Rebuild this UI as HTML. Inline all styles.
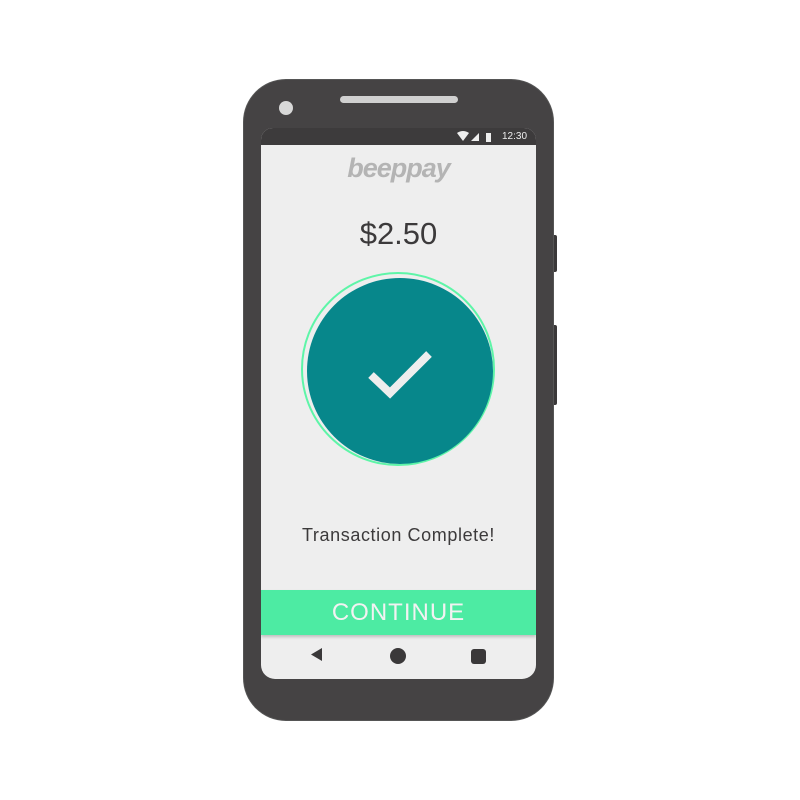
<!DOCTYPE html>
<html><head><style>
body{margin:0;width:800px;height:800px;background:#fff;position:relative;font-family:"Liberation Sans",sans-serif;overflow:hidden}
.a{position:absolute}
</style></head><body>
<div class="a" style="left:553px;top:235px;width:4px;height:37px;background:#3a3839;border-radius:0 2px 2px 0"></div>
<div class="a" style="left:553px;top:325px;width:4px;height:80px;background:#3a3839;border-radius:0 2px 2px 0"></div>
<div class="a" style="left:244px;top:80px;width:309px;height:640px;background:#454344;border-radius:42px;box-shadow:0 0 0 1px #555"></div>
<div class="a" style="left:279px;top:101px;width:14px;height:14px;background:#d8d8d8;border-radius:50%"></div>
<div class="a" style="left:340px;top:96px;width:118px;height:7px;background:#d0d0d0;border-radius:4px"></div>
<div class="a" style="left:261px;top:128px;width:275px;height:551px;background:#eeeeee;border-radius:12px 12px 14px 14px;overflow:hidden">
 <div class="a" style="left:0;top:0;width:275px;height:17px;background:#3d3b3c"></div>
 <svg class="a" style="left:196px;top:3px" width="50" height="12"><path d="M0 2 Q6 -2 12 2 L6 10Z" fill="#eee"/><path d="M14 10 L22 2 L22 10Z" fill="#eee"/><rect x="29" y="2" width="5" height="9" fill="#eee"/></svg>
 <div class="a" style="left:241px;top:3px;font-size:10px;color:#eee">12:30</div>
 <div class="a" style="left:0;top:25px;width:275px;text-align:center;font-size:27px;font-weight:bold;font-style:italic;color:#b4b4b4;letter-spacing:-1px">beeppay</div>
 <div class="a" style="left:0;top:88px;width:275px;text-align:center;font-size:31px;color:#3c3a3b">$2.50</div>
 <div class="a" style="left:40px;top:144px;width:194px;height:194px;border-radius:50%;border:2px solid #5ef5a8;box-sizing:border-box"></div>
 <div class="a" style="left:46px;top:150px;width:186px;height:186px;border-radius:50%;background:#07878b"></div>
 <svg class="a" style="left:100px;top:210px" width="80" height="70"><path d="M10 37 L29 55 L68 16" fill="none" stroke="#eeeeee" stroke-width="8"/></svg>
 <div class="a" style="left:0;top:397px;width:275px;text-align:center;font-size:18px;letter-spacing:0.6px;color:#3c3a3b">Transaction Complete!</div>
 <div class="a" style="left:0;top:462px;width:275px;height:45px;background:#4deba3;box-shadow:0 2px 3px rgba(0,0,0,.2);text-align:center;line-height:45px;font-size:24px;letter-spacing:1px;color:#f2f2f2">CONTINUE</div>
 <svg class="a" style="left:48px;top:518px" width="15" height="17"><path d="M2 8.5 L13 2 L13 15Z" fill="#3a3839"/></svg>
 <div class="a" style="left:129px;top:520px;width:16px;height:16px;border-radius:50%;background:#3a3839"></div>
 <div class="a" style="left:210px;top:521px;width:15px;height:15px;border-radius:3px;background:#3a3839"></div>
</div>
</body></html>
